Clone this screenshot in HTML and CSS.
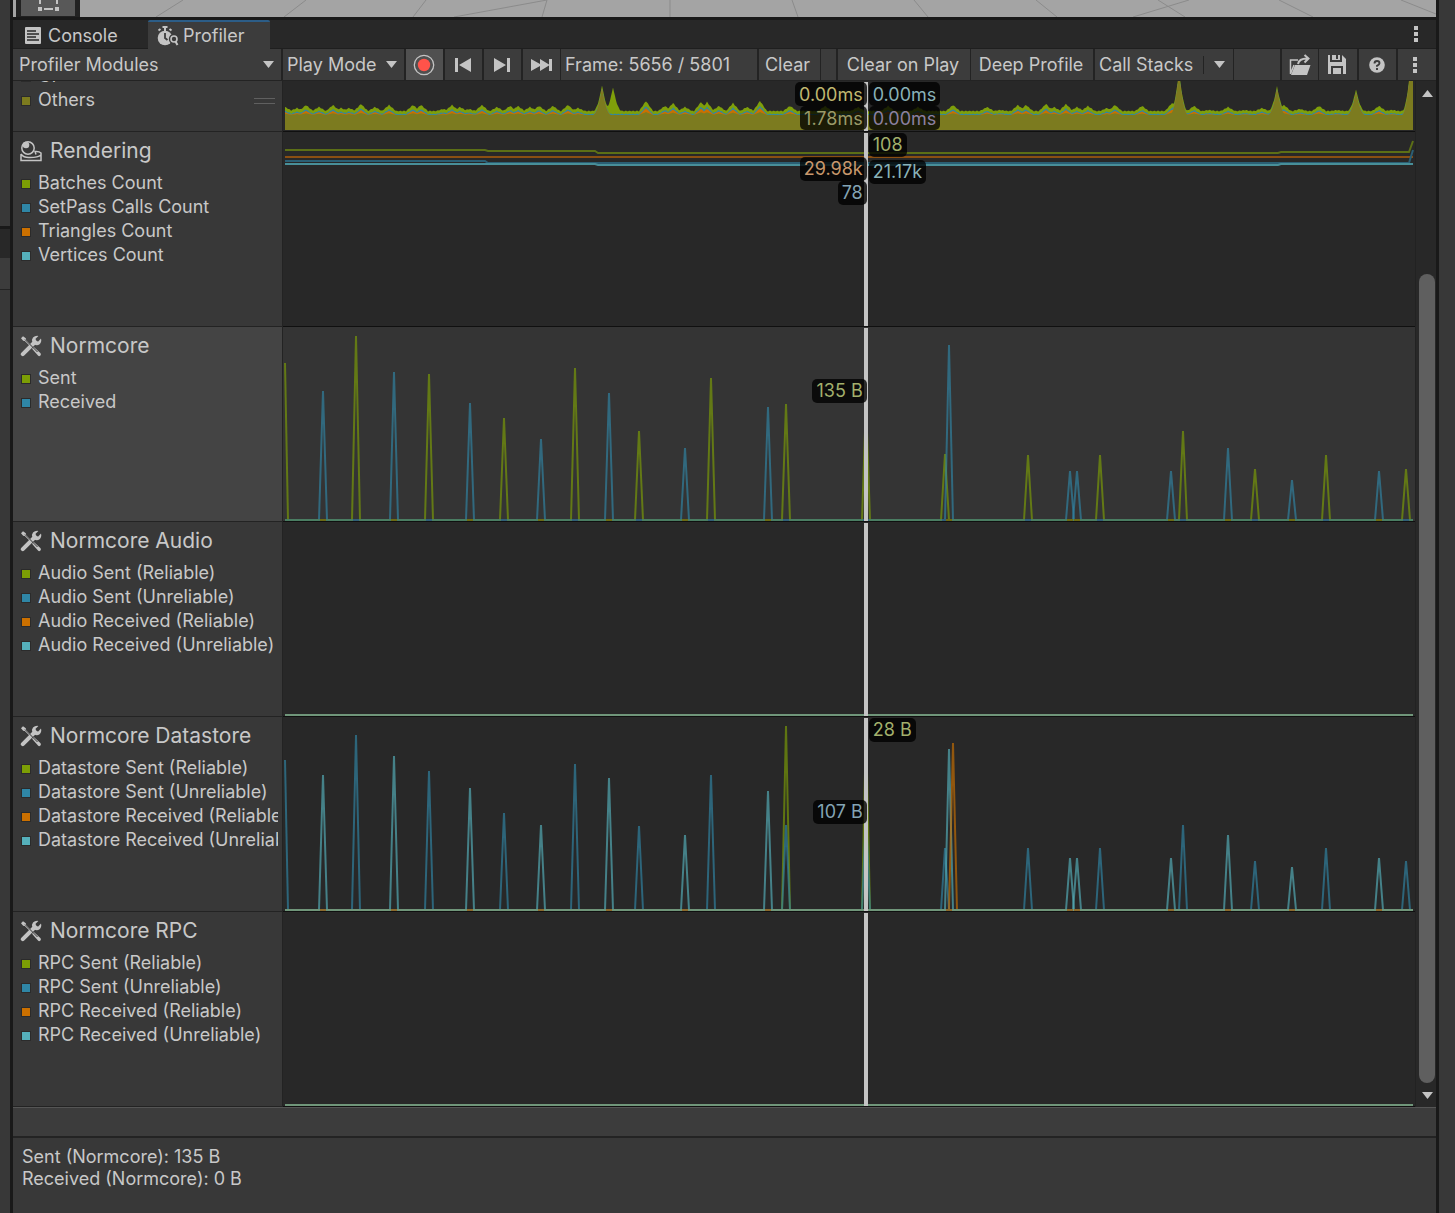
FILE: index.html
```html
<!DOCTYPE html>
<html lang="en">
<head>
<meta charset="utf-8">
<title>Profiler</title>
<link rel="stylesheet" href="styles.css">
</head>
<body>
<svg class="defs" aria-hidden="true">
  <symbol id="tools" viewBox="0 0 22 22">
    <path d="M1 3.2 3 1.2 5.8 3.2 6.2 5 11 10 10 11 4.8 6 3.2 5.8Z" fill="#c4c4c4"/>
    <path d="M12 13.8 13.8 12 20.6 18.2Q21.4 20 20.2 20.8 19 21.6 18 20.6Z" fill="#c4c4c4"/>
    <path d="M2.8 19.2 15 7" stroke="#c4c4c4" stroke-width="4" stroke-linecap="round" fill="none"/>
    <path d="M18.4.9 15.6 3.8 16 6 18.2 6.4 21 3.6Q22 7 19.6 9.2 17 11 14.4 9.4L12.6 7.6Q11 5 13 2.6 15.4.2 18.4.9Z" fill="#c4c4c4"/>
    <path d="M5 4.5 17.5 17" stroke="#333" stroke-width="1"/>
  </symbol>
</svg>
<div class="frame">
  <aside class="dock dock-left"><div class="dock-tab"></div><div class="dock-bar"></div></aside>
  <main class="window">
    <div class="scene">
      <div class="scene-tool">
        <svg width="54" height="16" viewBox="0 0 54 16"><g fill="#c4c4c4"><path d="M17 7h4v4h-4zM34 7h4v4h-4zM23 8h9v2h-9zM18 0h2v4h-2zM35 0h2v4h-2z"/></g></svg>
      </div>
      <svg class="grid-lines" viewBox="0 0 1356 17" preserveAspectRatio="none"><path d="M103 0 76 17M226 0 204 17M346 0 333 17M467 0 374 17M467 0 462 17M590 0V17M712 0 718 17M834 0 848 17M956 0 977 17M1109 0 1053 17M1078 0 1105 17M1199 0 1233 17M1321 0 1356 14" fill="none" stroke="#8b8b8b"/></svg>
    </div>
    <nav class="tabs">
      <button class="tab tab-console">
        <svg width="16" height="17" viewBox="0 0 16 17"><rect width="16" height="17" rx="1" fill="#c4c4c4"/><path d="M2 4h9M2 7h12M2 10h9M2 13h12" stroke="#282828" stroke-width="1.3"/></svg>
        Console</button>
      <button class="tab tab-profiler">
        <svg width="22" height="20" viewBox="0 0 22 20"><circle cx="8" cy="12" r="7.3" fill="#c4c4c4"/><path d="M5.500 1h5M8 1v4M1.500 4.500 3.500 3M12.500 3l2 1.500" stroke="#c4c4c4" stroke-width="2"/><path d="M8 7v5l2.500 2" stroke="#3c3c3c" stroke-width="1.800" fill="none"/><circle cx="17" cy="13" r="5.200" fill="#3c3c3c"/><circle cx="17" cy="13" r="3" fill="none" stroke="#c4c4c4" stroke-width="1.600"/><path d="m18.500 15.500 2 3.500" stroke="#c4c4c4" stroke-width="2"/></svg>
        Profiler</button>
      <button class="tab-menu" aria-label="Window menu"><svg width="4" height="16" viewBox="0 0 4 16"><path d="M0 0h4v4H0zM0 6h4v4H0zM0 12h4v4H0z" fill="#c4c4c4"/></svg></button>
    </nav>
    <div class="toolbar">
      <div class="drop drop-modules"><select aria-label="Profiler modules"><option>Profiler Modules</option></select><svg width="11" height="7" viewBox="0 0 11 7"><path d="M0 0h11L5.500 7z" fill="#c4c4c4"/></svg></div>
      <div class="drop drop-play"><select aria-label="Target"><option>Play Mode</option></select><svg width="11" height="7" viewBox="0 0 11 7"><path d="M0 0h11L5.500 7z" fill="#c4c4c4"/></svg></div>
      <button class="tool tool-step recording" aria-label="Record"><svg width="22" height="22" viewBox="0 0 22 22"><circle cx="11" cy="11" r="9.700" fill="none" stroke="#c4c4c4" stroke-width="1.300"/><circle cx="11" cy="11" r="6.200" fill="#ff534a"/></svg></button>
      <button class="tool tool-step" aria-label="Previous frame"><svg width="16" height="16" viewBox="0 0 16 16"><path d="M0 1h3v14H0zM16 1v14L4 8z" fill="#c4c4c4"/></svg></button>
      <button class="tool tool-step" aria-label="Next frame"><svg width="16" height="16" viewBox="0 0 16 16"><path d="M13 1h3v14h-3zM0 1v14L12 8z" fill="#c4c4c4"/></svg></button>
      <button class="tool tool-last" aria-label="Current frame"><svg width="22" height="12" viewBox="0 0 22 12"><path d="M0 0 9 5V0l9 5.500V0h3v12h-3V6.500L9 12V7L0 12z" fill="#c4c4c4"/></svg></button>
      <div class="frame-count">Frame: 5656 / 5801</div>
      <button class="tool tool-clear">Clear</button>
      <div class="gap"></div>
      <button class="tool tool-onplay">Clear on Play</button>
      <button class="tool tool-deep">Deep Profile</button>
      <button class="tool tool-stacks">Call Stacks<span class="split"></span><svg width="11" height="7" viewBox="0 0 11 7"><path d="M0 0h11L5.500 7z" fill="#c4c4c4"/></svg></button>
      <div class="spacer"></div>
      <button class="tool tool-open" aria-label="Load"><svg width="22" height="22" viewBox="0 0 22 22"><path d="M9 6H1.500v14M1.500 20 5 11" fill="none" stroke="#c4c4c4" stroke-width="1.500"/><path d="M6 11h15.500L18 21H2z" fill="#c4c4c4"/><path d="M9 10q1-5.500 9-5.500M15.500 1 19.500 4.500 15.500 8.500" fill="none" stroke="#c4c4c4" stroke-width="2"/></svg></button>
      <button class="tool tool-save" aria-label="Save"><svg width="18" height="19" viewBox="0 0 18 19"><path d="M0 0h2v7h12V0l4 4v15h-3v-8H3v8H0zM4 0h4v4h2V0h2v5H4zM5 13h8v6H5z" fill="#c4c4c4"/></svg></button>
      <button class="tool tool-step" aria-label="Help"><svg width="16" height="16" viewBox="0 0 16 16"><circle cx="8" cy="8" r="7.800" fill="#c4c4c4"/><path d="M5.500 6.500Q5.500 4 8 4t2.500 2.200Q10.500 7.500 8 8.800v1M8 11v2" fill="none" stroke="#3c3c3c" stroke-width="1.900"/></svg></button>
      <button class="tool tool-more" aria-label="More"><svg width="4" height="16" viewBox="0 0 4 16"><path d="M0 0h4v4H0zM0 6h4v4H0zM0 12h4v4H0z" fill="#c4c4c4"/></svg></button>
    </div>
    <div class="profiler">
      <div class="modules">
        <section class="module module-cpu">
          <div class="side">
            <ul class="legend"><li><i class="key gi"></i>GI</li><li><i class="key olive"></i>Others<span class="grip"></span></li></ul>
          </div>
          <div class="chart">
            <svg class="plot" id="cpu" viewBox="0 0 1132 50" preserveAspectRatio="none"></svg>
            <div class="cursor">
              <span class="tag before at-0 c-yellow">0.00ms</span><span class="tag before at-24 c-olive">1.78ms</span>
              <span class="tag after at-0 c-cyan">0.00ms</span><span class="tag after at-24 c-purple">0.00ms</span>
            </div>
          </div>
        </section>
        <section class="module">
          <div class="side">
            <h2><svg width="22" height="22" viewBox="0 0 22 22"><circle cx="8" cy="8" r="6.200" fill="none" stroke="#c4c4c4" stroke-width="1.500"/><circle cx="6" cy="5" r="3.300" fill="#c4c4c4"/><path d="M1 14v6.500h20v-7.500q-2-2-6-1.500l1 3M1 14q3 4 9 3.500 8 0 11-2.500" fill="none" stroke="#c4c4c4" stroke-width="1.500"/></svg>Rendering</h2>
            <ul class="legend"><li><i class="key green"></i>Batches Count</li><li><i class="key blue"></i>SetPass Calls Count</li><li><i class="key orange"></i>Triangles Count</li><li><i class="key cyan"></i>Vertices Count</li></ul>
          </div>
          <div class="chart">
            <svg class="plot" viewBox="0 0 1132 194" preserveAspectRatio="none">
              <g fill="none" stroke-width="2">
                <path d="M2 18H202L205 19H312L315 21H995L998 20H1126L1130 9" stroke="#5c6f16"/>
                <path d="M2 25H1130" stroke="#8a4f12"/>
                <path d="M2 29H202L205 31H1126L1130 18" stroke="#2b5f74"/>
                <path d="M2 32H312L315 33H995L998 32H1130" stroke="#488f99"/>
              </g>
            </svg>
            <div class="cursor">
              <span class="tag after at-0 c-green">108</span><span class="tag before at-24 c-orange">29.98k</span>
              <span class="tag after at-27 c-cyan">21.17k</span><span class="tag before at-48 c-blue">78</span>
            </div>
          </div>
        </section>
        <section class="module selected">
          <div class="side">
            <h2><svg width="22" height="22"><use href="#tools"/></svg>Normcore</h2>
            <ul class="legend"><li><i class="key green"></i>Sent</li><li><i class="key blue"></i>Received</li></ul>
          </div>
          <div class="chart">
            <svg class="plot" id="normcore" viewBox="0 0 1132 194" preserveAspectRatio="none"></svg>
            <div class="cursor"><span class="tag before at-51 c-green">135 B</span></div>
          </div>
        </section>
        <section class="module">
          <div class="side">
            <h2><svg width="22" height="22"><use href="#tools"/></svg>Normcore Audio</h2>
            <ul class="legend"><li><i class="key green"></i>Audio Sent (Reliable)</li><li><i class="key blue"></i>Audio Sent (Unreliable)</li><li><i class="key orange"></i>Audio Received (Reliable)</li><li><i class="key cyan"></i>Audio Received (Unreliable)</li></ul>
          </div>
          <div class="chart">
            <svg class="plot" viewBox="0 0 1132 194" preserveAspectRatio="none"><path d="M2 193H1130" stroke="#70967a" stroke-width="2"/></svg>
            <div class="cursor"></div>
          </div>
        </section>
        <section class="module">
          <div class="side">
            <h2><svg width="22" height="22"><use href="#tools"/></svg>Normcore Datastore</h2>
            <ul class="legend"><li><i class="key green"></i>Datastore Sent (Reliable)</li><li><i class="key blue"></i>Datastore Sent (Unreliable)</li><li><i class="key orange"></i>Datastore Received (Reliable)</li><li><i class="key cyan"></i>Datastore Received (Unreliable)</li></ul>
          </div>
          <div class="chart">
            <svg class="plot" id="datastore" viewBox="0 0 1132 194" preserveAspectRatio="none"></svg>
            <div class="cursor"><span class="tag after at-0 c-green">28 B</span><span class="tag before at-82 c-blue">107 B</span></div>
          </div>
        </section>
        <section class="module">
          <div class="side">
            <h2><svg width="22" height="22"><use href="#tools"/></svg>Normcore RPC</h2>
            <ul class="legend"><li><i class="key green"></i>RPC Sent (Reliable)</li><li><i class="key blue"></i>RPC Sent (Unreliable)</li><li><i class="key orange"></i>RPC Received (Reliable)</li><li><i class="key cyan"></i>RPC Received (Unreliable)</li></ul>
          </div>
          <div class="chart">
            <svg class="plot" viewBox="0 0 1132 194" preserveAspectRatio="none"><path d="M2 193H1130" stroke="#70967a" stroke-width="2"/></svg>
            <div class="cursor"></div>
          </div>
        </section>
      </div>
      <div class="scrollbar">
        <button class="arrow" aria-label="Scroll up"><svg width="11" height="7" viewBox="0 0 11 7"><path d="M0 7h11L5.500 0z" fill="#c4c4c4"/></svg></button>
        <div class="track"><div class="thumb"></div></div>
        <button class="arrow" aria-label="Scroll down"><svg width="11" height="7" viewBox="0 0 11 7"><path d="M0 0h11L5.500 7z" fill="#c4c4c4"/></svg></button>
      </div>
    </div>
    <div class="detail-bar"></div>
    <div class="details"><p>Sent (Normcore): 135 B</p><p>Received (Normcore): 0 B</p></div>
  </main>
  <aside class="dock"></aside>
</div>
<script src="charts.js"></script>
</body>
</html>
```
FILE: styles.css
```css
* { box-sizing: border-box; }
body {
  margin: 0;
  background: #191919;
  color: #c8c8c8;
  font: 18px/24px Inter, "Liberation Sans", sans-serif;
  font-optical-sizing: none;
}
h2, p, ul { margin: 0; padding: 0; font-weight: 400; list-style: none; }
button, select {
  margin: 0;
  padding: 0;
  border: 0;
  border-radius: 0;
  background: none;
  color: inherit;
  font: inherit;
  font-optical-sizing: none;
  white-space: nowrap;
}
svg { display: block; flex: none; }
.defs { display: none; }

.frame { display: grid; grid-template-columns: 10px minmax(0, 1fr) 16px; gap: 3px; min-height: 100vh; }
.dock { background: #383838; }
.dock-left { padding-top: 226px; }
.dock-tab { height: 32px; border-top: 3px solid #191919; background: #282828; }
.dock-bar { height: 32px; border-bottom: 1px solid #232323; background: #3c3c3c; }
.window { display: flex; flex-direction: column; background: #383838; }

.scene { display: flex; height: 20px; border-bottom: 3px solid #191919; background: #a4a4a4; }
.scene-tool { width: 64px; margin-left: 3px; padding: 0 5px; background: #222; }
.scene-tool svg { background: #585858; }
.grid-lines { flex: 1; min-width: 0; height: 17px; }

.tabs { display: flex; height: 29px; border-bottom: 1px solid #1f1f1f; background: #282828; }
.tab { display: flex; align-items: center; padding-top: 3px; }
.tab-console { gap: 7px; width: 135px; padding-left: 12px; }
.tab-profiler { gap: 4px; width: 122px; height: 29px; padding: 0 0 0 9px; border-top: 2px solid #2c5d87; border-radius: 2px 2px 0 0; background: #3c3c3c; }
.tab-menu { display: flex; align-items: center; margin-left: auto; padding-right: 18px; }

.toolbar { display: flex; height: 32px; border-bottom: 1px solid #232323; background: #3c3c3c; }
.toolbar > * { flex: none; border-right: 2px solid #232323; }
.tool { display: flex; align-items: center; justify-content: center; }
.drop { display: grid; align-items: center; }
.drop select { grid-area: 1 / 1; width: 100%; height: 100%; appearance: none; }
.drop svg { grid-area: 1 / 1; justify-self: end; pointer-events: none; }
.drop-modules { width: 270px; padding: 0 7px 0 6px; }
.drop-play { width: 123px; padding: 0 7px 0 4px; }
.tool-step { width: 39px; padding-right: 2px; }
.recording { background: #505050; }
.toolbar > .tool-last { width: 38px; border-right-width: 1px; }
.frame-count { width: 198px; padding-left: 4px; line-height: 32px; }
.toolbar > .tool-clear { width: 62px; padding-right: 4px; border-right-width: 1px; }
.gap { width: 17px; }
.toolbar > .tool-onplay { width: 133px; padding-right: 2px; border-right-width: 1px; }
.tool-deep { width: 124px; padding-right: 2px; }
.toolbar > .tool-stacks { width: 139px; padding: 0 8px 0 4px; justify-content: space-between; border-right-width: 1px; }
.split { width: 1px; height: 18px; background: #232323; }
.toolbar > .spacer { flex: 1 1 0; }
.toolbar > .tool-open { width: 37px; border-right-width: 1px; }
.tool-save { width: 40px; padding-right: 2px; }
.toolbar > .tool-more { width: 38px; padding-right: 4px; border-right: 0; }

.profiler { display: flex; }
.modules { flex: 1; min-width: 0; }
.module { display: flex; min-height: 195px; }
.side { width: 270px; flex: none; padding: 0 4px 0 8px; border-right: 1px solid #232323; border-bottom: 1px solid #232323; overflow: hidden; background: #383838; }
.selected .side { background: #444; }
.side h2 { display: flex; align-items: center; gap: 8px; height: 37px; margin: 0 0 2px -1px; font-size: 21px; }
.legend li { display: flex; align-items: center; gap: 7px; overflow: hidden; white-space: nowrap; }
.key { width: 10px; height: 10px; flex: none; margin-top: 2px; border: 1px solid #2b2b2b; }
.gi { background: #333; }
.olive { background: #7c7b1f; }
.green { background: #7c9e05; }
.blue { background: #2f86a6; }
.orange { background: #cb7000; }
.cyan { background: #55b0bb; }
.grip { width: 21px; height: 6px; margin: 2px 3px 0 auto; border: solid #606060; border-width: 1px 0; }
.chart { position: relative; flex: 1; min-width: 0; border-bottom: 1px solid #101010; background: #282828; }
.selected .chart { background: #343434; }
.plot { width: 100%; height: 194px; }
.module-cpu { min-height: 0; height: 51px; }
.module-cpu .side { display: flex; flex-direction: column; justify-content: flex-end; padding-bottom: 19px; }
.module-cpu .plot { height: 50px; }

.cursor { position: absolute; top: 1px; bottom: 0; left: 51.3%; width: 4px; background: #c4c4c4; }
.tag { position: absolute; height: 24px; padding: 0 4px; border-radius: 5px; background: rgba(0, 0, 0, .78); white-space: nowrap; }
.module-cpu .tag { line-height: 26px; }
.before { right: 1px; }
.after { left: 5px; }
.at-0 { top: 0; }
.at-24 { top: 24px; }
.at-27 { top: 27px; }
.at-48 { top: 48px; }
.at-51 { top: 51px; }
.at-82 { top: 82px; }
.c-yellow { color: #c0b870; }
.c-olive { color: #9a9a68; }
.c-cyan { color: #8ab2b8; }
.c-purple { color: #8c80a0; }
.c-green { color: #a2b06c; }
.c-orange { color: #c8986c; }
.c-blue { color: #84a4b4; }

.scrollbar { display: flex; flex-direction: column; width: 21px; padding: 0 1px 0 3px; border-left: 1px solid #222; background: #282828; }
.arrow { display: grid; place-items: center; height: 24px; }
.track { display: flex; flex: 1; align-items: flex-end; }
.thumb { width: 16px; height: 82.7%; border-radius: 8px; background: #5f5f5f; }

.detail-bar { height: 31px; border-top: 1px solid #555; border-bottom: 2px solid #232323; background: #3c3c3c; }
.details { flex: 1; padding: 8px 9px; line-height: 22px; }
```
FILE: charts.js
```js
const WIDTH = 1132;
const COLORS = { g: '#7c9e05', b: '#2f86a6', o: '#cb7000', c: '#55b0bb' };

// One spike: [x, height, series]
const normcore = [
  [40,129,'b'],[73,184,'g'],[111,148,'b'],[146,146,'g'],[187,117,'b'],[221,102,'g'],[258,81,'b'],
  [292,152,'g'],[326,127,'b'],[356,89,'g'],[402,72,'b'],[428,142,'g'],[485,113,'b'],[503,116,'g'],
  [583,118,'g'],[662,66,'g'],[666,175,'b'],[745,65,'g'],[787,49,'b'],[794,49,'b'],[817,65,'g'],
  [888,49,'b'],[900,89,'g'],[945,72,'b'],[972,51,'g'],[1009,40,'b'],[1043,65,'g'],[1096,49,'b'],[1123,51,'g']
];
const datastore = [
  [40,135,'c'],[73,175,'b'],[111,154,'c'],[146,139,'b'],[187,122,'c'],[221,97,'b'],[258,85,'c'],
  [292,146,'b'],[326,132,'c'],[356,84,'b'],[402,75,'c'],[428,135,'b'],[485,119,'c'],[503,184,'g'],
  [503,85,'b'],[583,184,'g'],[583,100,'b'],[662,62,'b'],[666,161,'c'],[670,167,'o'],[745,62,'b'],
  [787,52,'c'],[794,52,'c'],[817,62,'b'],[888,52,'c'],[900,85,'b'],[945,75,'c'],[972,49,'b'],
  [1009,43,'c'],[1043,62,'b'],[1096,52,'c'],[1123,49,'b']
];

function line(d, color, opacity) {
  return `<path d="${d}" fill="none" stroke="${color}" stroke-width="2" stroke-miterlimit="2" opacity="${opacity}"/>`;
}

function spikes(id, data, first, base, notes) {
  let out = line(`M2 ${193 - first[0]}L5 193`, COLORS[first[1]], 0.65);
  for (const [x, h, s] of data) {
    out += line(`M${x - 4} 193L${x} ${193 - h}L${x + 4} 193`, COLORS[s], 0.65);
  }
  out += line(`M2 193H${WIDTH - 2}`, base, 1);
  for (const [x, , s] of data) {
    if (notes[s]) out += line(`M${x - 3} 193H${x + 3}`, notes[s], 1);
  }
  document.getElementById(id).innerHTML = out;
}

spikes('normcore', normcore, [157, 'g'], '#4a7d62', { g: '#315f78', b: '#6c6a14' });
spikes('datastore', datastore, [150, 'b'], '#70967a', { c: '#8c6a2d' });

// Frame time bumps: [x, height above the resting level]
const bumps = [
  [2,4],[14,3],[23,6],[36,4],[50,6],[58,3],[66,3],[78,7],[92,4],[106,6],[130,6],[138,6],[160,2],[169,6],
  [177,4],[186,2],[199,6],[214,4],[227,5],[235,5],[247,4],[256,5],[270,5],[285,6],[295,3],[319,26],[330,24],
  [363,10],[382,5],[390,8],[402,4],[418,9],[424,9],[436,5],[450,8],[464,4],[477,10],[507,5],[542,5],[575,4],
  [605,5],[635,4],[670,6],[704,4],[717,1],[735,6],[743,6],[763,7],[771,4],[783,7],[794,4],[805,5],[824,3],
  [832,6],[859,5],[889,8],[896,40],[911,5],[926,1],[945,4],[962,1],[979,3],[994,25],[1001,6],[1017,2],
  [1036,5],[1054,1],[1073,22],[1096,5],[1109,1],[1128,50],[1130,50]
];

function cpu() {
  const tops = { g: [], o: [], b: [], y: [] };
  for (let x = 2; x <= WIDTH - 2; x++) {
    let small = 0;
    let tall = 0;
    let any = 0;
    for (const [bx, h] of bumps) {
      const t = Math.max(0, 1 - Math.abs(x - bx) / (h > 20 ? 9 : 7));
      const v = h * (h > 20 ? t * t : t);
      any = Math.max(any, v);
      if (h > 20 && bx !== 330) tall = Math.max(tall, v);
      else if (h < 20) small = Math.max(small, v);
    }
    const ripple = Math.sin(x * 1.7) * 0.4;
    tops.g.push([x, 30 - any + ripple]);
    tops.b.push([x, 33 - Math.max(tall, small * 0.8) + ripple]);
    tops.o.push([x, 34 - Math.max(tall, small * 0.7)]);
    tops.y.push([x, 34 - Math.max(tall, small * 0.3)]);
  }
  const area = (pts, color) =>
    `<path d="M2 49L${pts.map(([x, y]) => `${x} ${y.toFixed(1)}`).join('L')}V49Z" fill="${color}"/>`;
  document.getElementById('cpu').innerHTML =
    area(tops.g, '#7f9f0a') + area(tops.b, '#2f86a6') + area(tops.o, '#cb7000') + area(tops.y, '#7c7b1f');
}
cpu();
```
